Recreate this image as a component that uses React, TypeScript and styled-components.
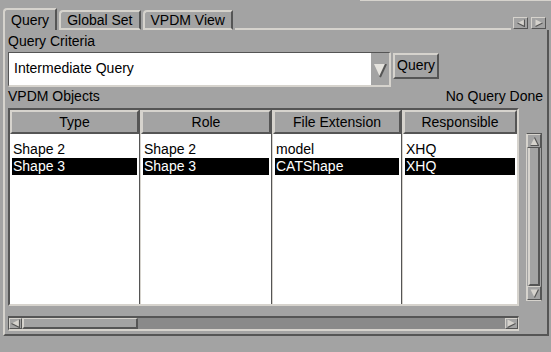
import * as React from 'react'
import styled, { createGlobalStyle, css } from 'styled-components'

const LIGHT = '#d6d3cd'
const DARK = '#555555'
const FACE = '#a3a3a3'
const TROUGH = '#8a8a8a'

const GlobalStyle = createGlobalStyle`
html, body {
    margin: 0;
    padding: 0;
    background: ${FACE};
}
body {
    font-family: "Liberation Sans", Arial, sans-serif;
    font-size: 14px;
    color: #000;
}
`

const raised = css`
    border-top: 1px solid ${LIGHT};
    border-left: 1px solid ${LIGHT};
    border-right: 1px solid ${DARK};
    border-bottom: 1px solid ${DARK};
`

const sunken = css`
    border-top: 1px solid ${DARK};
    border-left: 1px solid ${DARK};
    border-right: 1px solid ${LIGHT};
    border-bottom: 1px solid ${LIGHT};
`

const Window = styled.div`
width: 551px;
height: 352px;
background: ${FACE};
overflow: hidden;
`

const TopEdge = styled.div`
height: 1px;
margin-left: 360px;
background: ${LIGHT};
`

const TabRow = styled.div`
display: flex;
align-items: flex-end;
height: 22px;
margin-top: 7px;
padding-left: 3px;
padding-right: 2px;
`

const Tab = styled.div<{ $active?: boolean }>`
height: ${p => p.$active ? 22 : 20}px;
padding: 0 6px 0 6px;
margin-right: 2px;
box-sizing: border-box;
display: flex;
align-items: center;
border-top: 2px solid ${LIGHT};
border-left: 2px solid ${LIGHT};
border-right: 2px solid ${DARK};
border-top-left-radius: 4px;
border-bottom: ${p => p.$active ? 'none' : `2px solid ${LIGHT}`};
line-height: 16px;
`

const TabFiller = styled.div`
flex: 1;
height: 0;
border-bottom: 2px solid ${LIGHT};
`

const TabArrows = styled.div`
display: flex;
gap: 3px;
align-self: flex-start;
margin-top: 9px;
margin-left: 2px;
margin-right: 3px;
`

const SmallButton = styled.div<{ $w: number, $h: number }>`
${raised}
width: ${p => p.$w}px;
height: ${p => p.$h}px;
box-sizing: border-box;
display: flex;
align-items: center;
justify-content: center;
background: ${FACE};
flex: none;
`

const Panel = styled.div`
margin: 0 2px 0 3px;
height: 306px;
box-sizing: border-box;
border-left: 2px solid ${LIGHT};
border-right: 2px solid ${DARK};
border-bottom: 2px solid ${DARK};
padding: 2px 4px 0 3px;
display: flex;
flex-direction: column;
`

const Label = styled.div`
height: 19px;
line-height: 19px;
`

const LabelRow = styled.div`
display: flex;
justify-content: space-between;
height: 19px;
line-height: 19px;
`

const ComboRow = styled.div`
display: flex;
align-items: flex-start;
gap: 2px;
margin-top: 1px;
height: 35px;
`

const Combo = styled.div`
${sunken}
border-bottom-width: 2px;
border-right-width: 2px;
width: 383px;
height: 35px;
box-sizing: border-box;
display: flex;
`

const ComboField = styled.div`
flex: 1;
background: #fff;
padding-left: 5px;
line-height: 31px;
`

const ComboArrow = styled.div`
width: 18px;
display: flex;
align-items: center;
justify-content: center;
padding-top: 4px;
`

const Button = styled.div`
${raised}
border-width: 2px;
height: 26px;
box-sizing: border-box;
padding: 0 2px;
line-height: 21px;
margin-top: 1px;
`

const TableArea = styled.div`
display: flex;
gap: 7px;
margin-top: 2px;
height: 198px;
`

const Table = styled.div`
${sunken}
border-width: 2px;
width: 511px;
box-sizing: border-box;
display: flex;
flex: none;
`

const Column = styled.div<{ $w: number }>`
width: ${p => p.$w}px;
flex: none;
display: flex;
flex-direction: column;
border-right: 1px solid ${DARK};
&:last-child { border-right: none; }
& + & { border-left: 1px solid ${LIGHT}; }
`

const Header = styled.div`
${raised}
border-width: 2px;
height: 24px;
box-sizing: border-box;
text-align: center;
line-height: 20px;
background: ${FACE};
`

const ColumnBody = styled.div`
flex: 1;
background: #fff;
padding: 7px 2px 0 2px;
`

const Cell = styled.div<{ $selected?: boolean }>`
height: 17px;
line-height: 17px;
padding-left: 1px;
white-space: nowrap;
background: ${p => p.$selected ? '#000' : 'transparent'};
color: ${p => p.$selected ? '#fff' : '#000'};
`

const VScroll = styled.div`
margin-top: 25px;
width: 16px;
height: 168px;
box-sizing: border-box;
border-left: 1px solid ${LIGHT};
border-right: 1px solid ${DARK};
border-top: 1px solid ${DARK};
border-bottom: 1px solid ${LIGHT};
display: flex;
flex-direction: column;
`

const VThumb = styled.div`
flex: 1;
margin: 0 1px;
border-left: 2px solid ${LIGHT};
border-right: 2px solid ${DARK};
border-bottom: 2px solid ${DARK};
`

const HScroll = styled.div`
margin-top: 10px;
width: 511px;
height: 15px;
box-sizing: border-box;
border-top: 2px solid ${DARK};
border-bottom: 2px solid ${LIGHT};
border-left: 1px solid ${DARK};
border-right: 1px solid ${LIGHT};
display: flex;
background: ${TROUGH};
`

const HThumb = styled.div<{ $w: number }>`
width: ${p => p.$w}px;
box-sizing: border-box;
background: ${FACE};
border-left: 2px solid ${LIGHT};
border-top: 1px solid ${LIGHT};
border-right: 2px solid ${DARK};
border-bottom: 2px solid ${DARK};
`

const HTrough = styled.div`
flex: 1;
`

function Arrow(props: { dir: 'left' | 'right' | 'up' | 'down', size?: number }) {
    const s = props.size ?? 9
    const pts = {
        left: `${s},0 ${s},${s} 0,${s / 2}`,
        right: `0,0 0,${s} ${s},${s / 2}`,
        up: `0,${s} ${s},${s} ${s / 2},0`,
        down: `0,0 ${s},0 ${s / 2},${s}`,
    }[props.dir]
    const shade = {
        left: `${s},0 ${s},${s} 0,${s / 2}`,
        right: `0,${s} ${s},${s / 2}`,
        up: `0,${s} ${s},${s} ${s / 2},0`,
        down: `${s},0 ${s / 2},${s}`,
    }[props.dir]
    return <svg width={s + 1} height={s + 1} viewBox={`-0.5 -0.5 ${s + 1} ${s + 1}`}>
        <polygon points={pts} fill={LIGHT} />
        <polyline points={shade} fill="none" stroke={DARK} strokeWidth={1.2} />
    </svg>
}

function DropTriangle() {
    return <svg width="13" height="14" viewBox="0 0 13 14">
        <polygon points="0,0 12,0 6,13" fill="#e4e2dd" />
        <polyline points="12,0 6,13" fill="none" stroke={DARK} strokeWidth={2} />
    </svg>
}

const columns = [
    { title: 'Type', width: 129, cells: ['Shape 2', 'Shape 3'] },
    { title: 'Role', width: 130, cells: ['Shape 2', 'Shape 3'] },
    { title: 'File Extension', width: 128, cells: ['model', 'CATShape'] },
    { title: 'Responsible', width: 114, cells: ['XHQ', 'XHQ'] },
]

export default function App() {
    const selectedRow = 1

    return <Window>
        <GlobalStyle />
        <TopEdge />
        <TabRow>
            <Tab $active>Query</Tab>
            <Tab>Global Set</Tab>
            <Tab>VPDM View</Tab>
            <TabFiller />
            <TabArrows>
                <SmallButton $w={15} $h={12}><Arrow dir="left" size={7} /></SmallButton>
                <SmallButton $w={15} $h={12}><Arrow dir="right" size={7} /></SmallButton>
            </TabArrows>
        </TabRow>
        <Panel>
            <Label>Query Criteria</Label>
            <ComboRow>
                <Combo>
                    <ComboField>Intermediate Query</ComboField>
                    <ComboArrow><DropTriangle /></ComboArrow>
                </Combo>
                <Button>Query</Button>
            </ComboRow>
            <LabelRow>
                <span>VPDM Objects</span>
                <span>No Query Done</span>
            </LabelRow>
            <TableArea>
                <Table>
                    {columns.map(col =>
                        <Column key={col.title} $w={col.width}>
                            <Header>{col.title}</Header>
                            <ColumnBody>
                                {col.cells.map((c, i) =>
                                    <Cell key={i} $selected={i === selectedRow}>{c}</Cell>
                                )}
                            </ColumnBody>
                        </Column>
                    )}
                </Table>
                <VScroll>
                    <SmallButton $w={14} $h={14}><Arrow dir="up" size={8} /></SmallButton>
                    <VThumb />
                    <SmallButton $w={14} $h={14}><Arrow dir="down" size={8} /></SmallButton>
                </VScroll>
            </TableArea>
            <HScroll>
                <SmallButton $w={13} $h={11}><Arrow dir="left" size={8} /></SmallButton>
                <HThumb $w={116} />
                <HTrough />
                <SmallButton $w={13} $h={11}><Arrow dir="right" size={8} /></SmallButton>
            </HScroll>
        </Panel>
    </Window>
}
